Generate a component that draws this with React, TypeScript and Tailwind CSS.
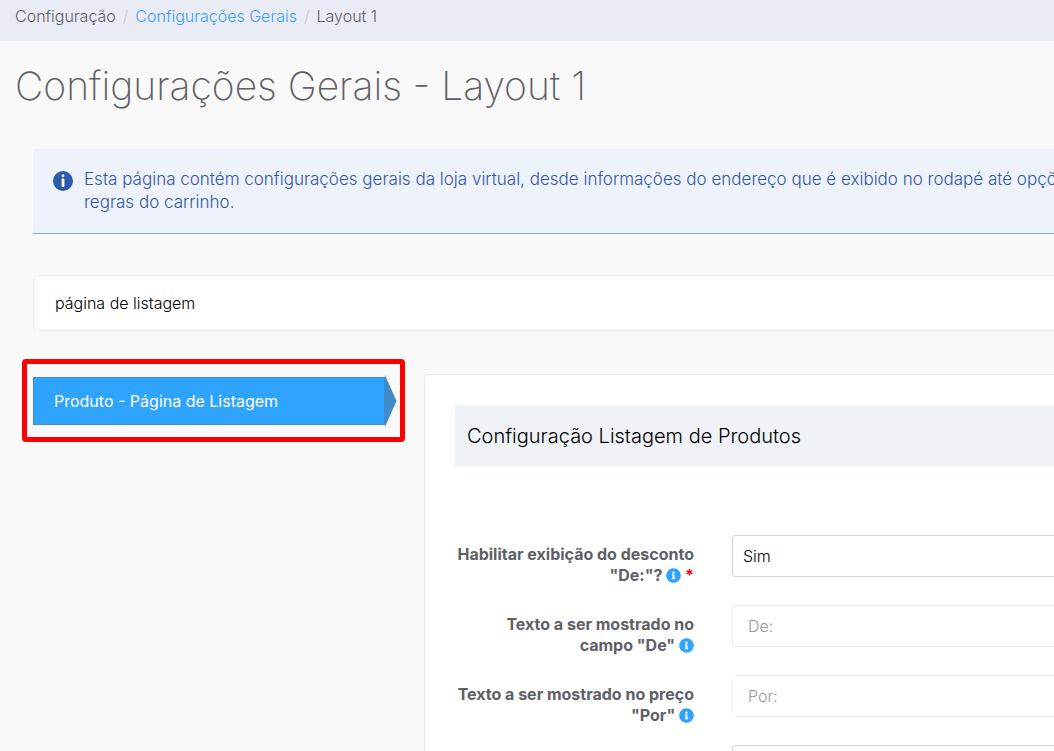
import { FaInfoCircle } from 'react-icons/fa';

interface Field {
  id: string;
  lines: [string, string];
  required?: boolean;
  placeholder?: string;
  options?: string[];
}

const fields: Field[] = [
  { id: 'discount', lines: ['Habilitar exibição do desconto', '"De:"?'], required: true, options: ['Sim'] },
  { id: 'from-text', lines: ['Texto a ser mostrado no', 'campo "De"'], placeholder: 'De:' },
  { id: 'price-text', lines: ['Texto a ser mostrado no preço', '"Por"'], placeholder: 'Por:' },
];

function Breadcrumb() {
  return (
    <nav className="flex h-[41px] shrink-0 items-start gap-[7px] bg-[#e9ecf4] px-[15px] pt-[5px] text-base leading-[22px]">
      <span>Configuração</span>
      <span className="text-[#c8cad0]">/</span>
      <a href="#" className="text-[#3fa0ff]">Configurações Gerais</a>
      <span className="text-[#c8cad0]">/</span>
      <span>Layout 1</span>
    </nav>
  );
}

function Notice() {
  return (
    <div className="flex items-start gap-[11px] border-b border-[#8ea4d8] bg-[#eef2fb] pt-[19px] pb-[19px] pl-5 text-[#3358a8]">
      <svg viewBox="0 0 20 20" className="mt-[3px] size-5 shrink-0">
        <circle cx="10" cy="10" r="10" fill="#2e5aac" />
        <circle cx="10" cy="4.8" r="1.4" fill="#fff" />
        <rect x="8.6" y="7.4" width="2.8" height="8.6" rx="1.2" fill="#fff" />
      </svg>
      <p className="text-[17px] leading-[23px] whitespace-nowrap">
        Esta página contém configurações gerais da loja virtual, desde informações do endereço que é exibido no rodapé até opções
        <br />
        regras do carrinho.
      </p>
    </div>
  );
}

function SideMenu() {
  return (
    <div className="relative w-[352px] shrink-0">
      <a href="#" className="block border border-[#428bca] bg-[#2fa4ff] py-3 pl-5 text-base leading-[22px] font-normal text-white">
        Produto - Página de Listagem
      </a>
      <svg viewBox="0 0 12 52" className="absolute -top-[2px] left-full h-[52px] w-3">
        <path d="M0 0L11.5 26L0 52Z" fill="#428bca" />
      </svg>
      <div className="pointer-events-none absolute -top-[18px] -right-5 -left-[11px] h-[83px] rounded-sm border-5 border-[#ff0000]" />
    </div>
  );
}

function FieldRow({ field }: { field: Field }) {
  return (
    <div className="flex items-start gap-[38px]">
      <label htmlFor={field.id} className="w-[239px] shrink-0 pt-[9px] text-right text-base leading-[21px] font-bold whitespace-nowrap">
        {field.lines[0]}
        <br />
        {field.lines[1]} <FaInfoCircle size={15} className="inline align-[-2px] text-[#2fa4ff]" />
        {field.required && <span className="text-[#ff0000]"> *</span>}
      </label>
      {field.options ? (
        <select id={field.id} className="h-[42px] grow appearance-none rounded-l-sm border border-r-0 border-[#d3d4d8] bg-white px-[10px] text-base text-black">
          {field.options.map(o => <option key={o}>{o}</option>)}
        </select>
      ) : (
        <input id={field.id} placeholder={field.placeholder} className="h-[42px] grow rounded-l-sm border border-r-0 border-[#ebebee] bg-white px-[15px] text-base placeholder:text-[#999999]" />
      )}
    </div>
  );
}

export default function App() {
  return (
    <div className="flex h-screen flex-col overflow-hidden bg-[#f9f9f9] font-[Inter,sans-serif] font-light text-[#5e6066]">
      <Breadcrumb />
      <main className="flex grow flex-col pl-[33px]">
        <h1 className="-ml-[18px] pt-5 text-[39px] leading-[50px] font-extralight whitespace-nowrap">Configurações Gerais - Layout 1</h1>
        <div className="mt-[38px]">
          <Notice />
        </div>
        <input
          aria-label="página de listagem"
          defaultValue="página de listagem"
          className="mt-[41px] h-14 w-full shrink-0 rounded-l-sm border border-r-0 border-[#ebebee] bg-white px-[21px] text-base text-black"
        />
        <div className="mt-[43px] flex items-start gap-[39px]">
          <div className="pt-[3px]">
            <SideMenu />
          </div>
          <section className="grow rounded-l-sm border border-r-0 border-[#e6e7ee] bg-white py-[30px] pl-[30px]">
            <h2 id="section-title" className="bg-[#eff3f7] px-3 py-[18px] text-xl leading-[26px] text-black">Configuração Listagem de Produtos</h2>
            <div className="mt-[68px] flex flex-col gap-[19px]">
              {fields.map(f => <FieldRow key={f.id} field={f} />)}
              <div className="flex pl-[277px]">
                <select aria-labelledby="section-title" className="h-[42px] grow appearance-none rounded-l-sm border border-r-0 border-[#d3d4d8] bg-white" />
              </div>
            </div>
          </section>
        </div>
      </main>
    </div>
  );
}
